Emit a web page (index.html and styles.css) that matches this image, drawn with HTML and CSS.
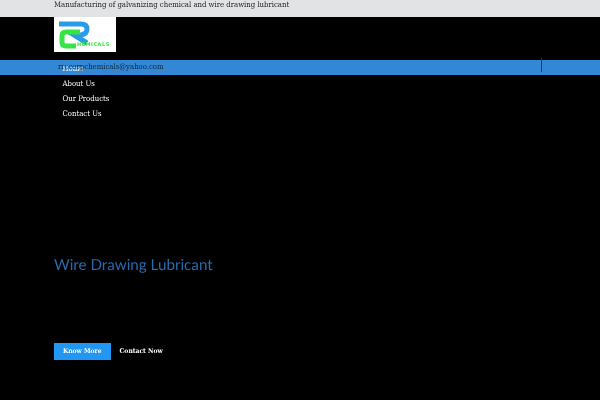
FILE: index.html
```html
<!DOCTYPE html>
<html lang="en">
<head>
<meta charset="utf-8">
<title>R Chemicals</title>
<link rel="stylesheet" href="styles.css">
</head>
<body>
<div class="page">
<div class="topbar"><p class="tagline">Manufacturing of galvanizing chemical and wire drawing lubricant</p></div>
<header class="brand">
  <div class="logo">
    <svg class="logo-mark" viewBox="0 0 62 35" width="62" height="35" aria-hidden="true">
      <path d="M5 7H27Q33 7 33 12Q33 17 27 18H20L33 26" fill="none" stroke="#2a9be8" stroke-width="5"/>
      <path d="M26 15H12Q8 15 8 19V25Q8 29 12 29H22" fill="none" stroke="#36e544" stroke-width="5"/>
    </svg>
    <span class="logo-text">HEMICALS</span>
  </div>
</header>
<nav class="navbar">
  <span class="nav-divider"></span>
  <a class="email">rrccorpchemicals@yahoo.com</a>
  <ul class="menu">
    <li>Home</li>
    <li>About Us</li>
    <li>Our Products</li>
    <li>Contact Us</li>
  </ul>
</nav>
<main class="hero">
  <h1 class="hero-title">Wire Drawing Lubricant</h1>
  <div class="actions">
    <a class="btn btn-primary">Know More</a>
    <a class="btn btn-link">Contact Now</a>
  </div>
</main>
</div>
</body>
</html>
```
FILE: styles.css
```css
* { box-sizing: border-box; }
html, body { margin: 0; height: 100%; }
body {
  background: #000;
  color: #fff;
  font-family: "DejaVu Serif Condensed", "DejaVu Serif", serif;
  font-stretch: condensed;
  font-size: 7.7px;
  text-rendering: geometricPrecision;
  overflow: hidden;
}
.page {
  height: 100%;
  filter: blur(0.3px);
}
.topbar {
  height: 17px;
  padding-left: 54px;
  background: #e2e3e5;
  color: #222;
  line-height: 10px;
}
.tagline { margin: 0; }
.brand { height: 43px; padding-left: 54px; }
.logo {
  position: relative;
  width: 62px;
  height: 35px;
  background: #fff;
}
.logo-mark { display: block; }
.logo-text {
  position: absolute;
  left: 23px;
  bottom: 4px;
  color: #36e544;
  font-family: "DejaVu Sans", sans-serif;
  font-stretch: normal;
  font-size: 5px;
  font-weight: 700;
  letter-spacing: 0.5px;
  line-height: 6px;
}
.navbar {
  position: relative;
  height: 15px;
  padding-left: 54px;
  background: #3388d6;
}
.nav-divider {
  position: absolute;
  left: 541px;
  top: -2px;
  width: 1px;
  height: 14px;
  background: #1c3a55;
}
.email {
  position: absolute;
  left: 58px;
  top: 2px;
  color: #10263c;
  line-height: 10px;
}
.menu {
  margin: 0;
  padding: 0.5px 0 0 8.5px;
  list-style: none;
  line-height: 15px;
}
.hero { padding: 180.5px 0 0 54px; }
.hero-title {
  margin: -1px 0 0;
  color: #2a6aad;
  font-family: Lato, sans-serif;
  font-stretch: normal;
  font-size: 15.2px;
  font-weight: 400;
  line-height: 20px;
}
.actions {
  display: flex;
  align-items: center;
  margin-top: 68px;
}
.btn {
  padding: 0 9px;
  font-size: 6.7px;
  font-weight: 700;
  line-height: 17px;
}
.btn-primary { background: #2196f3; color: #fff; }
.btn-link { color: #fff; }
```
